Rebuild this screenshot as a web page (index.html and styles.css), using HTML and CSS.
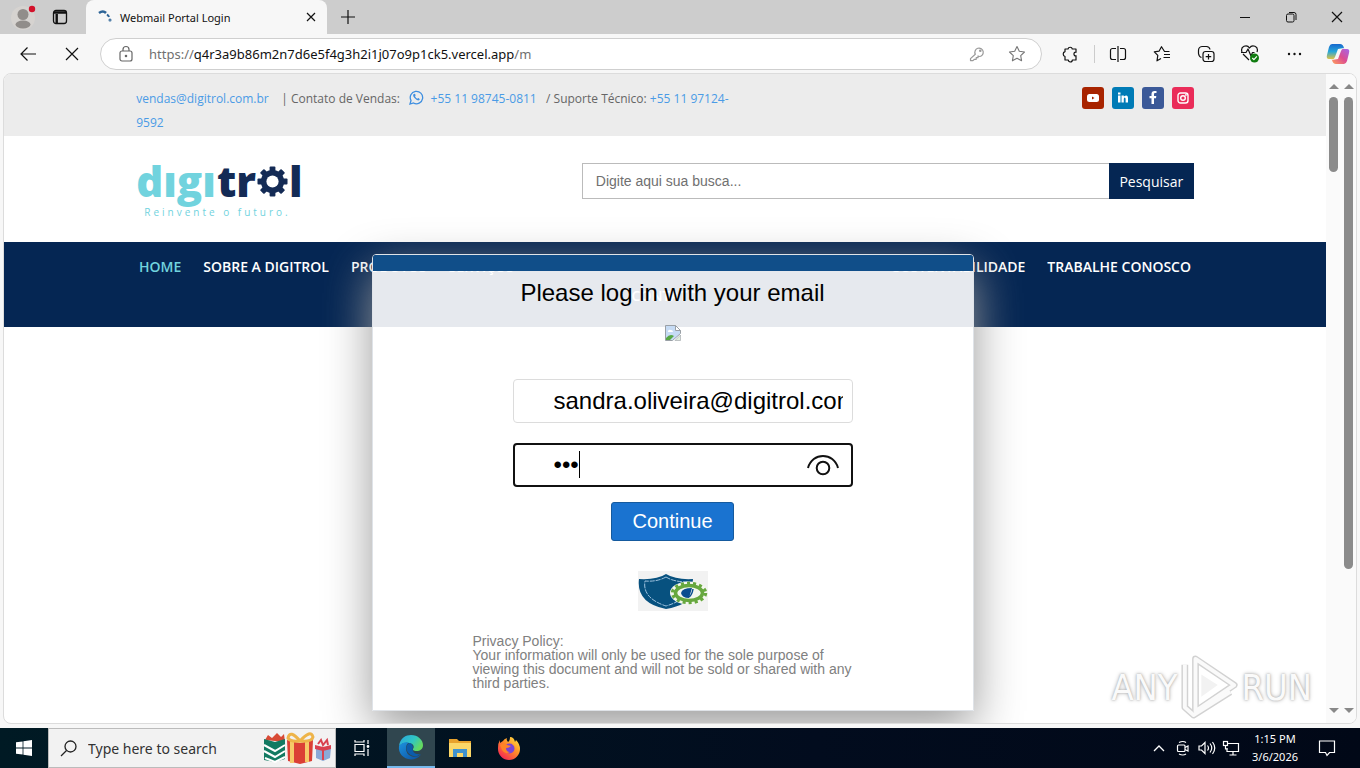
FILE: index.html
```html
<!DOCTYPE html>
<html lang="en">
<head>
<meta charset="utf-8">
<meta name="viewport" content="width=device-width, initial-scale=1">
<title>Webmail Portal Login</title>
<link rel="stylesheet" href="styles.css">
</head>
<body>
<header class="tabbar">
  <button class="tab-btn" aria-label="Profile"><svg width="26" height="26" viewBox="0 0 26 26"><circle cx="13" cy="14" r="12" fill="#d6d3d0"/><circle cx="13" cy="10.500" r="5.500" fill="#918d8a"/><ellipse cx="13" cy="20.500" rx="7.500" ry="4" fill="#918d8a"/><circle cx="22" cy="5" r="3.200" fill="#d3122b"/></svg></button>
  <button class="tab-btn tab-btn-wide" aria-label="Tab actions"><svg width="16" height="16" viewBox="0 0 16 16" fill="none" stroke="#111" stroke-width="1.300"><rect x="1.500" y="1.500" width="13" height="13" rx="2.500"/><path d="M2 3.500h12M4.700 5v9" stroke-width="2.400"/></svg></button>
  <div class="tab">
    <svg width="14" height="14" viewBox="0 0 14 14" fill="none" stroke="#2d6497" stroke-width="2.600"><path d="M1 3Q5 0 8 3"/><path d="M9 4.500q1.500 1 2 2.500" stroke-width="2"/><circle cx="12" cy="10" r=".5" stroke-width="2"/></svg>
    <span class="tab-title">Webmail Portal Login</span>
    <button class="tab-close" aria-label="Close tab"><svg width="10" height="10" viewBox="0 0 10 10" stroke="#111" stroke-width="1.200"><path d="M1 1l8 8M9 1L1 9"/></svg></button>
  </div>
  <button class="tab-new" aria-label="New tab"><svg width="14" height="14" viewBox="0 0 14 14" stroke="#111" stroke-width="1.200"><path d="M7 0v14M0 7h14"/></svg></button>
  <div class="window-btns">
    <button aria-label="Minimize"><svg width="12" height="12" viewBox="0 0 12 12" stroke="#111"><path d="M1 6.500h10"/></svg></button>
    <button aria-label="Restore"><svg width="12" height="12" viewBox="0 0 12 12" fill="none" stroke="#111"><rect x="1.500" y="3" width="7.500" height="8" rx="1.500"/><path d="M4 1.500h5q2 0 2 2V9"/></svg></button>
    <button aria-label="Close"><svg width="12" height="12" viewBox="0 0 12 12" stroke="#111" stroke-width="1.200"><path d="M1 1l10 10M11 1L1 11"/></svg></button>
  </div>
</header>

<div class="toolbar">
  <button class="tool" aria-label="Back"><svg width="18" height="16" viewBox="0 0 18 16" fill="none" stroke="#111" stroke-width="1.200"><path d="M17 8H2M8.500 1.500L2 8l6.500 6.500"/></svg></button>
  <button class="tool" aria-label="Stop"><svg width="14" height="14" viewBox="0 0 14 14" stroke="#111" stroke-width="1.200"><path d="M1 1l12 12M13 1L1 13"/></svg></button>
  <div class="address">
    <svg width="14" height="18" viewBox="0 0 14 18" fill="none" stroke="#666" stroke-width="1.200"><rect x="1" y="6" width="12" height="10" rx="2"/><path d="M4 6V4.500a3 3 0 016 0V6"/><circle cx="7" cy="11" r=".7" fill="#666"/></svg>
    <div class="url"><span class="url-dim">https://</span>q4r3a9b86m2n7d6e5f4g3h2i1j07o9p1ck5.vercel.app<span class="url-dim">/m</span></div>
    <button class="address-btn" aria-label="Passwords"><svg width="16" height="16" viewBox="0 0 16 16" fill="none" stroke="#999" stroke-width="1.200" stroke-linejoin="round"><path d="M6.300 8.200A4.200 4.200 0 1110 10.500L9 10v1.700H7.200v1.600H5.400L4 14.600H1.500v-2z"/><circle cx="11.300" cy="4.800" r=".7"/></svg></button>
    <button class="address-btn" aria-label="Add to favorites"><svg width="18" height="18" viewBox="0 0 18 18" fill="none" stroke="#777" stroke-width="1.100" stroke-linejoin="round"><path d="M9 1.500l2.300 4.800 5.200.7-3.800 3.600.9 5.200L9 13.300l-4.600 2.500.9-5.200L1.500 7l5.200-.7z"/></svg></button>
  </div>
  <div class="tools">
    <button aria-label="Extensions"><svg width="18" height="18" viewBox="0 0 18 18" fill="none" stroke="#111" stroke-width="1.200" stroke-linejoin="round"><path d="M4 4h3a2.200 2.200 0 014.300 0H15v3.300a1.500 1.500 0 00-2 1.700 1.500 1.500 0 002 1.700V15h-3.700a2 2 0 01-4 0H4v-3.500a2.500 2.500 0 010-4.800z"/></svg></button>
    <span class="tool-rule"></span>
    <button aria-label="Split screen"><svg width="18" height="18" viewBox="0 0 18 18" fill="none" stroke="#111" stroke-width="1.200"><path d="M7 3.500H3.500a2 2 0 00-2 2v7a2 2 0 002 2H7M11 3.500h3.500a2 2 0 012 2v7a2 2 0 01-2 2H11M9 1v16"/></svg></button>
    <button aria-label="Favorites"><svg width="18" height="18" viewBox="0 0 18 18" fill="none" stroke="#111" stroke-width="1.200" stroke-linejoin="round"><path d="M16.500 6.500h-5L8.500 1.700 6 6.200l-4.700.7 3.500 3.500-.8 5.400L8 13.500M11 9.500h6M10.500 12.500H17"/></svg></button>
    <button aria-label="Collections"><svg width="18" height="18" viewBox="0 0 18 18" fill="none" stroke="#111" stroke-width="1.200"><rect x="6" y="6.500" width="11" height="10" rx="2.500"/><path d="M11.500 9v5.500M8.700 11.700h5.500M4.500 12.500Q2 12 1.500 8.500V5.500Q1.500 2 5 1.500h4.500q3 0 3.500 3"/></svg></button>
    <button aria-label="Browser essentials"><svg width="20" height="20" viewBox="0 0 20 20" fill="none" stroke="#111" stroke-width="1.200" stroke-linejoin="round"><path d="M2 8C0 2 7 0 9.500 4 12 0 19 2 17 8M3 10l6 6M1 8.500h5l2-3.500 3 7 1.500-3.500h2"/><circle cx="14.500" cy="14" r="4.500" fill="#107c10" stroke="none"/><path d="M12.300 14l1.600 1.600 3-3.200" stroke="#fff"/></svg></button>
    <button aria-label="Settings and more"><svg width="18" height="18" viewBox="0 0 18 18" fill="#111"><circle cx="4" cy="9" r="1.200"/><circle cx="9.500" cy="9" r="1.200"/><circle cx="15" cy="9" r="1.200"/></svg></button>
    <button aria-label="Copilot"><svg width="24" height="22" viewBox="0 0 24 22"><defs><linearGradient id="ca" x1="0" y1="0" x2="0" y2="1"><stop stop-color="#1768ce"/><stop offset=".5" stop-color="#27a7d8"/><stop offset="1" stop-color="#e4c340"/></linearGradient><linearGradient id="cb" x1="1" y1="0" x2="0" y2="1"><stop stop-color="#a466ec"/><stop offset=".5" stop-color="#dc4c91"/><stop offset="1" stop-color="#ffa05b"/></linearGradient></defs><path d="M6 1h8q3 0 4 4l-6 1-3 8q-1 3-4 2H3Q0 16 1 12l2-8q1-3 3-3z" fill="url(#ca)"/><path d="M18 21h-8q-3 0-4-4l6-1 3-8q1-3 4-2h2q3 0 2 4l-2 8q-1 3-3 3z" fill="url(#cb)"/></svg></button>
  </div>
</div>

<main class="viewport">
  <div class="site">
    <div class="site-top">
      <div class="wrap top-row">
        <p class="contact"><a href="#mail">vendas@digitrol.com.br</a> &nbsp; &nbsp;| Contato de Vendas: &nbsp; <svg class="wa" width="15" height="15" viewBox="0 0 15 15"><path d="M1 14l1-3.500A6.200 6.200 0 114.500 13z" fill="none" stroke="#3f8fe0" stroke-width="1.300"/><path d="M5 3.700q-2 1.500.5 4.300 3 3.600 5 2 .8-1-.8-1.800-.7-.4-1.200.6Q7 8.300 6 6.300q1-.6.400-1.700Q5.800 3.400 5 3.700z" fill="#3f8fe0"/></svg>&nbsp; <a href="#sales">+55 11 98745-0811</a> &nbsp; / Suporte Técnico: <a href="#support">+55 11 97124-9592</a></p>
        <nav class="social" aria-label="Social">
          <a class="yt" href="#yt" aria-label="YouTube"><svg width="12" height="12" viewBox="0 0 12 12"><rect y="2" width="12" height="8" rx="2.500" fill="#fff"/><path d="M5 4.500v3L7.500 6z" fill="#a82400"/></svg></a>
          <a class="li" href="#in" aria-label="LinkedIn"><svg width="12" height="12" viewBox="0 0 12 12" fill="#fff"><path d="M1 .5h2.500v2H1zM1 3.500h2.500v7H1zM4.500 3.500h2.300v1Q11 2 11 6.500v4H8.600V7q0-1.500-.9-1.500T6.800 7v3.500H4.500z"/></svg></a>
          <a class="fb" href="#fb" aria-label="Facebook"><svg width="12" height="14" viewBox="0 0 12 14"><path d="M9.500 2H8q-1 0-1 1.300V5h2.300L9 7.200H7V13H4.500V7.200h-2V5h2V3q0-3 3-3h2z" fill="#fff"/></svg></a>
          <a class="ig" href="#ig" aria-label="Instagram"><svg width="12" height="12" viewBox="0 0 12 12" fill="none" stroke="#fff" stroke-width="1.400"><rect x="1" y="1" width="10" height="10" rx="2.500"/><circle cx="6" cy="6" r="2.300"/><circle cx="8.900" cy="3.100" r=".3"/></svg></a>
        </nav>
      </div>
    </div>
    <div class="wrap site-head">
      <a class="logo" href="#home" aria-label="digitrol">
        <span class="logo-word"><span class="logo-light">dıgı</span><span>tr</span><svg width="31" height="31" viewBox="-16 -16 32 32"><g fill="#142b55"><rect x="-3" y="-15.500" width="6" height="31" rx="1"/><rect x="-3" y="-15.500" width="6" height="31" rx="1" transform="rotate(45)"/><rect x="-3" y="-15.500" width="6" height="31" rx="1" transform="rotate(90)"/><rect x="-3" y="-15.500" width="6" height="31" rx="1" transform="rotate(135)"/><circle r="12"/></g><circle r="6.300" fill="#fff"/></svg><span>l</span></span>
        <span class="logo-tag">Reinvente o futuro.</span>
      </a>
      <div class="search" role="search">
        <input type="text" aria-label="Busca" placeholder="Digite aqui sua busca...">
        <button>Pesquisar</button>
      </div>
    </div>
    <nav class="menu" aria-label="Principal">
      <div class="menu-row">
        <div class="menu-group"><a class="active" href="#home">HOME</a><a href="#sobre">SOBRE A DIGITROL</a><a href="#produtos">PRODUTOS</a><a href="#servicos">SERVIÇOS</a></div>
        <div class="menu-group"><a href="#sust">SUSTENTABILIDADE</a><a href="#trab">TRABALHE CONOSCO</a></div>
      </div>
      <a class="menu-last" href="#contato">CONTATO</a>
    </nav>
  </div>
  <div class="scroll"><i class="up"></i><i class="thumb thumb-short"></i><i class="down"></i></div>
  <div class="scroll"><i class="up"></i><i class="thumb thumb-long"></i><i class="down"></i></div>

  <div class="overlay">
    <section class="modal">
      <div class="modal-bar"></div>
      <div class="modal-body">
        <h1>Please log in with your email</h1>
        <svg class="broken" width="16" height="16" viewBox="0 0 16 16"><path d="M.5.500h10l5 5v3l-8 7h-7z" fill="#c6dbf4" stroke="#9aa0a6"/><path d="M10.500.500v5h5z" fill="#fff" stroke="#9aa0a6"/><path d="M3 6q1-2 3-1 2 0 2 2H3z" fill="#fff"/><path d="M1 15v-2q4-5 8-2l-4 4z" fill="#57a844"/><path d="M15.500 10v5.500H10z" fill="#dfeedd" stroke="#9aa0a6" stroke-width=".6"/></svg>
        <div class="fields">
          <input class="field" type="text" aria-label="Email" value="sandra.oliveira@digitrol.com.br">
          <div class="pass">
            <input class="field field-focus" type="password" aria-label="Password" value="abc">
            <span class="caret"></span>
            <button class="eye" type="button" aria-label="Show password"><svg width="34" height="22" viewBox="0 0 34 22" fill="none" stroke="#111" stroke-width="2"><path d="M2 14C6-2 28-2 32 14"/><circle cx="17" cy="14" r="6.300"/></svg></button>
          </div>
        </div>
        <button class="continue" type="button">Continue</button>
        <svg class="shield" width="70" height="40" viewBox="0 0 70 40"><rect width="70" height="40" fill="#f2f2f2"/><path d="M28 3q10 6 27 5-1 8 1 14-6 12-28 16Q-2 32 1 8q18 1 27-5z" fill="#07517f"/><path d="M28 6q8 5 22 5M28 6Q19 11 7 10q-3 17 21 25 10-3 15-7" fill="none" stroke="#9fc3df" stroke-dasharray="5 1"/><ellipse cx="51" cy="22" rx="19" ry="11.500" fill="#f4f7ef"/><ellipse cx="51" cy="22" rx="16.500" ry="9.500" fill="none" stroke="#67a83f" stroke-width="3.500" stroke-dasharray="3 3"/><ellipse cx="51" cy="22" rx="13.500" ry="7.500" fill="none" stroke="#67a83f" stroke-width="3.500"/><path d="M43 22q1-5 11-5l-3 10q-7 0-8-5z" fill="#0a4d90"/><path d="M55 18q-1 6-4 8" fill="none" stroke="#0a4d90" stroke-width="1.500"/></svg>
        <p class="privacy">Privacy Policy:<br>Your information will only be used for the sole purpose of viewing this document and will not be sold or shared with any third parties.</p>
      </div>
    </section>
  </div>

  <div class="mark"><span>ANY</span><svg width="60" height="64" viewBox="0 0 62 66" fill="none" stroke-linejoin="round"><g stroke="#d2d2d2" stroke-width="7"><path d="M16 4l40 27L16 58z"/><path d="M5 10v44l9 8 38-24"/></g><g stroke="#fafafa" stroke-width="4"><path d="M16 4l40 27L16 58z"/><path d="M5 10v44l9 8 38-24"/></g><path d="M22 20l17 11-17 12z" fill="#f2f2f2"/></svg><span>RUN</span></div>
</main>

<footer class="taskbar">
  <button class="start" aria-label="Start"><svg width="16" height="16" viewBox="0 0 16 16" fill="#fff"><path d="M0 2.300L6.600 1.400v6.200H0zM7.400 1.300L16 0v7.600H7.400zM0 8.400h6.600v6.200L0 13.700zM7.400 8.400H16V16l-8.600-1.300z"/></svg></button>
  <label class="tsearch">
    <svg width="17" height="17" viewBox="0 0 17 17" fill="none" stroke="#222" stroke-width="1.300"><circle cx="10.500" cy="6.500" r="5.500"/><path d="M6.500 10.500L1 16"/></svg>
    <input type="text" aria-label="Search" placeholder="Type here to search">
    <svg width="68" height="34" viewBox="0 0 68 34"><path d="M2 9l3-5 4 3 5-5 4 4 3-3 1 8z" fill="#d84a35"/><path d="M1 8l11 3 10-3v20l-10 3-11-2z" fill="#137a62"/><path d="M1 14l11 6 10-6M1 20l11 6 10-6M2 27l10 4 10-5" fill="none" stroke="#fff" stroke-width="2"/><path d="M24 9l13 3 13-3-1 21-12 3-12-3z" fill="#db3f35"/><path d="M29 10v22M44 10v21" stroke="#f6c869" stroke-width="4"/><path d="M37 10Q27-2 25 7q2 4 12 3Q48-2 50 6q-1 5-13 4" fill="none" stroke="#eeb449" stroke-width="3"/><path d="M53 17l7 2 8-2-1 10-7 3-7-3z" fill="#8aa9d7"/><path d="M52 14l8 2 8-2v4l-8 2-8-2z" fill="#d9414f"/><path d="M60 19v10M55 13l3-4 2 5 4-5 1 5" stroke="#d9414f" stroke-width="2" fill="none"/></svg>
  </label>
  <div class="tasks">
  <button class="task" aria-label="Task view"><svg width="18" height="18" viewBox="0 0 18 18" fill="none" stroke="#fff" stroke-width="1.200"><path d="M2 1v2h9V1M2 17v-2h9v2M2 5.500h9v7H2zM15 1v4M15 10v7"/><circle cx="15" cy="7.500" r=".8" fill="#fff"/></svg></button>
  <button class="task task-on" aria-label="Edge"><svg width="26" height="26" viewBox="0 0 26 26"><defs><linearGradient id="e1" x1="0" y1="0" x2="1" y2=".5"><stop stop-color="#2aa4df"/><stop offset=".6" stop-color="#30c6c4"/><stop offset="1" stop-color="#64d960"/></linearGradient><linearGradient id="e2" x1="0" y1="0" x2="1" y2="1"><stop stop-color="#1c92df"/><stop offset="1" stop-color="#0c4e9d"/></linearGradient></defs><path d="M1 12C2 4 8 1 13 1c7 0 12 5 12 10 0 4-3 6-6.500 6-3 0-4.500-1-3-3 1-2-1-5-5-5Q5 8 1 12z" fill="url(#e1)"/><path d="M1 12q4-5 10-3.500-3 1.500-3 6 0 6 6 8 5 1 9-2-4 5-10 5C5 25 0 19 1 12z" fill="url(#e2)"/><path d="M11 9Q7 12 9 17q3 6 10 5l4-2q-6 1-8-3-1-2 0-4-1-4-4-4z" fill="#0b5cab"/></svg></button>
  <button class="task" aria-label="File Explorer"><svg width="22" height="20" viewBox="0 0 22 20"><path d="M0 1h8l2 2h12v16H0z" fill="#e8a22c"/><path d="M0 5h22v14H0z" fill="#fbd768"/><path d="M4 19v-8h14v8h-4v-4H8v4z" fill="#3f92cf"/></svg></button>
  <button class="task" aria-label="Firefox"><svg width="24" height="24" viewBox="0 0 24 24"><defs><linearGradient id="ff" x1="1" y1="0" x2=".2" y2="1"><stop stop-color="#fff04a"/><stop offset=".45" stop-color="#ff9327"/><stop offset="1" stop-color="#f52055"/></linearGradient></defs><path d="M1 12Q1 7 3 4v3l3-2q1-2 4-3-1 2 1 4 2-1 2-5 4 0 5 5l1-2q4 4 4 9a11 11 0 01-22 0z" fill="url(#ff)"/><circle cx="12.500" cy="12.500" r="5" fill="#7844d8"/><path d="M3 9q5-3 7 0l4 1q-2 2-5 2 0 4 4 4-5 3-8-2z" fill="#ff8427"/></svg></button>
  </div>
  <div class="tray">
    <button aria-label="Hidden icons"><svg width="12" height="8" viewBox="0 0 12 8" fill="none" stroke="#fff" stroke-width="1.300"><path d="M1 7l5-5 5 5"/></svg></button>
    <button aria-label="Meet now"><svg width="14" height="16" viewBox="0 0 14 16" fill="none" stroke="#fff" stroke-width="1.200"><rect x="1.500" y="5" width="7.500" height="6.500" rx="1"/><path d="M9 7.500l3-1.500v5L9 9.500M3 2.500q4-2 7 0M3 14q4 2 7 0"/></svg></button>
    <button aria-label="Volume"><svg width="18" height="16" viewBox="0 0 18 16" fill="none" stroke="#fff" stroke-width="1.200"><path d="M1 6h2.500L7 2.500v11L3.500 10H1zM9.500 5.500q2 2.500 0 5M12 3.500q3.500 4.500 0 9M14.500 2q4.500 6 0 12"/></svg></button>
    <button aria-label="Network"><svg width="18" height="16" viewBox="0 0 18 16" fill="none" stroke="#fff" stroke-width="1.200"><path d="M6 3.500h10.500v8H5V8M11 11.500V15M7.500 15h7"/><rect x="1.500" y="1.500" width="4" height="4"/><path d="M3.500 5.500V9h2"/></svg></button>
    <div class="clock"><span>1:15 PM</span><span>3/6/2026</span></div>
    <button class="notice" aria-label="Notifications"><svg width="18" height="18" viewBox="0 0 18 18" fill="none" stroke="#fff" stroke-width="1.200"><path d="M1.500 2h15v11.500h-5L9 16.500 7.500 13.500h-6z"/></svg></button>
  </div>
</footer>
</body>
</html>
```
FILE: styles.css
```css
* { box-sizing: border-box; }
body {
  margin: 0;
  height: 100vh;
  display: flex;
  flex-direction: column;
  overflow: hidden;
  background: #f7f7f7;
  font-family: "Noto Sans", "Open Sans", sans-serif;
  font-size: 12px;
}
button { border: 0; padding: 0; background: none; font: inherit; display: flex; align-items: center; justify-content: center; }
a { color: inherit; text-decoration: none; }
svg { flex: none; }

.tabbar { height: 34px; flex: none; display: flex; align-items: center; background: #cdcdcd; padding-left: 8px; }
.tab-btn { width: 30px; }
.tab-btn-wide { width: 44px; }
.tab { width: 241px; height: 34px; margin-left: 4px; padding: 0 10px 0 12px; display: flex; align-items: center; gap: 8px; background: #f7f7f7; border-radius: 8px 8px 0 0; }
.tab-title { flex: 1; font-size: 11px; color: #111; white-space: nowrap; }
.tab-close { width: 12px; }
.tab-new { width: 42px; }
.window-btns { margin-left: auto; display: flex; }
.window-btns button { width: 46px; height: 34px; }

.toolbar { height: 39px; flex: none; display: flex; align-items: center; padding-left: 6px; }
.tool { width: 44px; height: 32px; }
.address { flex: 1; height: 32px; margin-left: 6px; padding: 0 12px 0 18px; display: flex; align-items: center; gap: 16px; background: #fff; border: 1px solid #cfcfcf; border-radius: 16px; }
.url { flex: 1; font-size: 13px; color: #111; white-space: nowrap; }
.url-dim { color: #707070; }
.address-btn { width: 24px; }
.tools { display: flex; align-items: center; padding-left: 6px; }
.tools button { width: 44px; height: 32px; }
.tool-rule { width: 1px; height: 18px; margin: 0 1px 0 2px; background: #ccc; }

.viewport { position: relative; flex: 1; min-height: 0; display: flex; margin: 0 3px 4px; border: 1px solid #dcdcdc; border-radius: 8px; overflow: hidden; background: #fff; }
.site { flex: 1; font-family: "Open Sans", sans-serif; }
.wrap { width: 80%; margin: 0 auto; display: flex; }
.site-top { background: #ececec; height: 62px; padding-top: 13px; }
.top-row { justify-content: space-between; }
.contact { width: 600px; margin: 0; font-size: 12px; line-height: 24px; font-weight: 400; color: #666; }
.contact a { color: #4a9be6; }
.wa { vertical-align: -2px; }
.social { display: flex; gap: 8px; }
.social a { width: 22px; height: 22px; border-radius: 3px; display: flex; align-items: center; justify-content: center; }
.yt { background: #a82400; }
.li { background: #007bb6; }
.fb { background: #3b5998; }
.ig { background: #ea2c59; }
.site-head { height: 106px; padding-top: 27px; justify-content: space-between; align-items: flex-start; }
.logo { display: flex; flex-direction: column; color: #142b55; }
.logo-word { display: flex; align-items: center; gap: 1px; height: 36px; font-weight: 800; font-size: 42px; line-height: 36px; }
.logo-light { color: #71d3de; }
.logo-tag { margin: 6px 0 0 8px; font-size: 10px; line-height: 14px; letter-spacing: 3px; color: #71d3de; }
.search { width: 612px; height: 36px; display: flex; }
.search input { flex: 1; min-width: 0; padding: 0 13px; border: 1px solid #bbb; border-right: 0; font: 14px "Liberation Sans", sans-serif; }
.search input::placeholder { color: #707070; }
.search button { width: 85px; background: #052653; color: #fff; font-size: 14px; }
.menu { height: 85px; background: #052653; color: #fff; font-size: 14px; font-weight: 600; line-height: 20px; padding: 15px 135px 0; display: flex; flex-direction: column; align-items: center; gap: 9px; }
.menu-row { width: 100%; display: flex; justify-content: space-between; white-space: nowrap; }
.menu-group { display: flex; gap: 22px; }
.active { color: #71d3de; }

.scroll { width: 15px; display: flex; flex-direction: column; align-items: center; background: #fafafa; padding: 10px 0; gap: 8px; }
.scroll .up { border: 5px solid transparent; border-top: 0; border-bottom: 5px solid #888; }
.scroll .down { margin-top: auto; border: 5px solid transparent; border-bottom: 0; border-top: 5px solid #888; }
.thumb { width: 9px; border-radius: 5px; background: #8b8b8b; }
.thumb-short { height: 12%; }
.thumb-long { height: 75%; }

.overlay { position: absolute; inset: 0 15px 0 0; padding-top: 180px; display: flex; justify-content: center; align-items: flex-start; font-family: "Liberation Sans", Arial, sans-serif; }
.modal { width: 602px; border: 1px solid #dfe3e8; border-radius: 4px 4px 0 0; box-shadow: 0 16px 48px #999; overflow: hidden; }
.modal-bar { height: 16px; background: #104e89; }
.modal-body { background: rgba(255, 255, 255, .9); display: flex; flex-direction: column; align-items: center; padding: 8px 100px 20px; }
.modal h1 { margin: 0; font-size: 24px; line-height: 28px; font-weight: 400; color: #000; }
.broken { margin-top: 18px; }
.fields { width: 340px; margin: 38px 0 0 20px; display: flex; flex-direction: column; gap: 20px; }
.field { display: block; width: 100%; height: 44px; padding: 0 9px 0 40px; border: 1px solid #dcdcdc; border-radius: 4px; background: #fff; color: #000; font: 24px "Liberation Sans", Arial, sans-serif; outline: 0; }
.field-focus { border: 2px solid #111; padding-left: 39px; }
.pass { position: relative; }
.caret { position: absolute; left: 66px; top: 8px; width: 1px; height: 27px; background: #000; }
.eye { position: absolute; right: 13px; top: 11px; }
.continue { width: 123px; height: 39px; margin-top: 15px; border: 1px solid #155a9e; border-radius: 3px; background: #1a73d0; color: #fff; font-size: 20px; }
.shield { margin-top: 30px; }
.privacy { margin: 23px 0 0; font-size: 14px; line-height: 14px; color: #808080; }

.mark { position: absolute; right: 44px; bottom: 4px; display: flex; align-items: center; gap: 2px; font: 36px "Liberation Sans Narrow", "DejaVu Sans Condensed", sans-serif; color: #fafafa; text-shadow: 0 0 2px #aaa, 0 0 4px #bbb; }

.taskbar { height: 40px; flex: none; display: flex; align-items: stretch; background: linear-gradient(90deg, #001a24, #020c1e 60%, #010817); }
.start { width: 48px; }
.tsearch { width: 288px; padding: 0 4px 0 11px; display: flex; align-items: center; gap: 11px; background: #f2f2f2; border: 1px solid #bbb; }
.tsearch input { flex: 1; min-width: 0; padding: 0; border: 0; background: none; font: 14px "Noto Sans", sans-serif; }
.tsearch input::placeholder { color: #333; }
.tasks { display: flex; gap: 1px; padding-left: 2px; }
.task { width: 48px; }
.task-on { background: #30464f; border-bottom: 2px solid #76b9ed; }
.tray { margin-left: auto; display: flex; align-items: center; color: #fff; }
.tray button { width: 24px; height: 40px; }
.clock { width: 64px; display: flex; flex-direction: column; align-items: center; font-size: 11px; line-height: 18px; }
.tray .notice { width: 53px; padding-right: 13px; }
```
